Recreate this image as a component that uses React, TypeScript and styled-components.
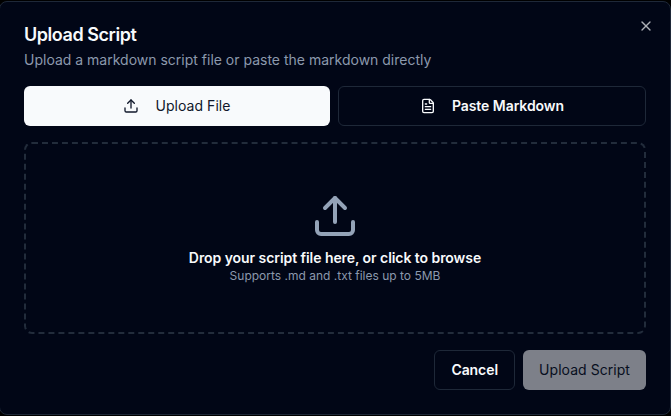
import React from "react";
import styled, { createGlobalStyle } from "styled-components";
import { FileText, Upload, X } from "lucide-react";

const GlobalStyle = createGlobalStyle`
  *, *::before, *::after { box-sizing: border-box; }
  html, body { height: 100%; }
  body {
    margin: 0;
    background: #000;
    font-family: Inter, sans-serif;
    font-size: 14px;
    line-height: 20px;
    overflow: hidden;
  }
  h2, p { margin: 0; }
  button { font: inherit; margin: 0; }
`;

const Dialog = styled.section`
  position: relative;
  width: 672px;
  height: 414px;
  margin: 1px 0 0 -1px;
  padding: 24px;
  display: flex;
  flex-direction: column;
  gap: 16px;
  border: 1px solid #1e2838;
  border-radius: 8px;
  background: #010616;
  color: #f8fafc;
`;

const Header = styled.header`
  display: flex;
  flex-direction: column;
  gap: 6px;
`;

const Title = styled.h2`
  font-size: 18px;
  line-height: 18px;
  font-weight: 600;
  letter-spacing: -0.45px;
`;

const Description = styled.p`
  color: #8c99ad;
`;

const CloseButton = styled.button`
  position: absolute;
  top: 16px;
  right: 16px;
  width: 16px;
  height: 16px;
  padding: 0;
  display: flex;
  border: 0;
  background: none;
  color: #f8fafc;
  opacity: 0.7;
`;

const Row = styled.div<{ $end?: boolean }>`
  display: flex;
  gap: 8px;
  justify-content: ${(p) => (p.$end ? "flex-end" : "flex-start")};
`;

const Button = styled.button<{ $outline?: boolean; $grow?: boolean }>`
  height: 40px;
  padding: 8px 16px;
  display: inline-flex;
  align-items: center;
  justify-content: center;
  gap: 16px;
  flex: ${(p) => (p.$grow ? "1 1 0%" : "none")};
  border: ${(p) => (p.$outline ? "1px solid #1e2838" : "0")};
  border-radius: 6px;
  background: ${(p) => (p.$outline ? "#010616" : "#f8fafc")};
  color: ${(p) => (p.$outline ? "#f8fafc" : "#0f172a")};
  font-weight: ${(p) => (p.$outline ? 600 : 400)};
  letter-spacing: ${(p) => (p.$outline ? "-0.06px" : "0.05px")};
  &:disabled { opacity: 0.5; }
`;

const DropZone = styled.div`
  height: 192px;
  display: flex;
  flex-direction: column;
  align-items: center;
  justify-content: center;
  border: 2px dashed #222c3b;
  border-radius: 8px;
  svg { color: #94a3b8; margin-bottom: 8px; }
`;

const DropLabel = styled.p`
  font-weight: 600;
  letter-spacing: -0.06px;
`;

const DropHint = styled.p`
  font-size: 12px;
  line-height: 16px;
  color: #8c99ad;
`;

export default function App() {
  return (
    <>
      <GlobalStyle />
      <Dialog role="dialog" aria-label="Upload Script">
        <Header>
          <Title>Upload Script</Title>
          <Description>Upload a markdown script file or paste the markdown directly</Description>
        </Header>
        <Row>
          <Button $grow><Upload size={16} />Upload File</Button>
          <Button $grow $outline><FileText size={16} />Paste Markdown</Button>
        </Row>
        <DropZone>
          <Upload size={48} />
          <DropLabel>Drop your script file here, or click to browse</DropLabel>
          <DropHint>Supports .md and .txt files up to 5MB</DropHint>
        </DropZone>
        <Row $end>
          <Button $outline>Cancel</Button>
          <Button disabled>Upload Script</Button>
        </Row>
        <CloseButton aria-label="Close"><X size={16} /></CloseButton>
      </Dialog>
    </>
  );
}
